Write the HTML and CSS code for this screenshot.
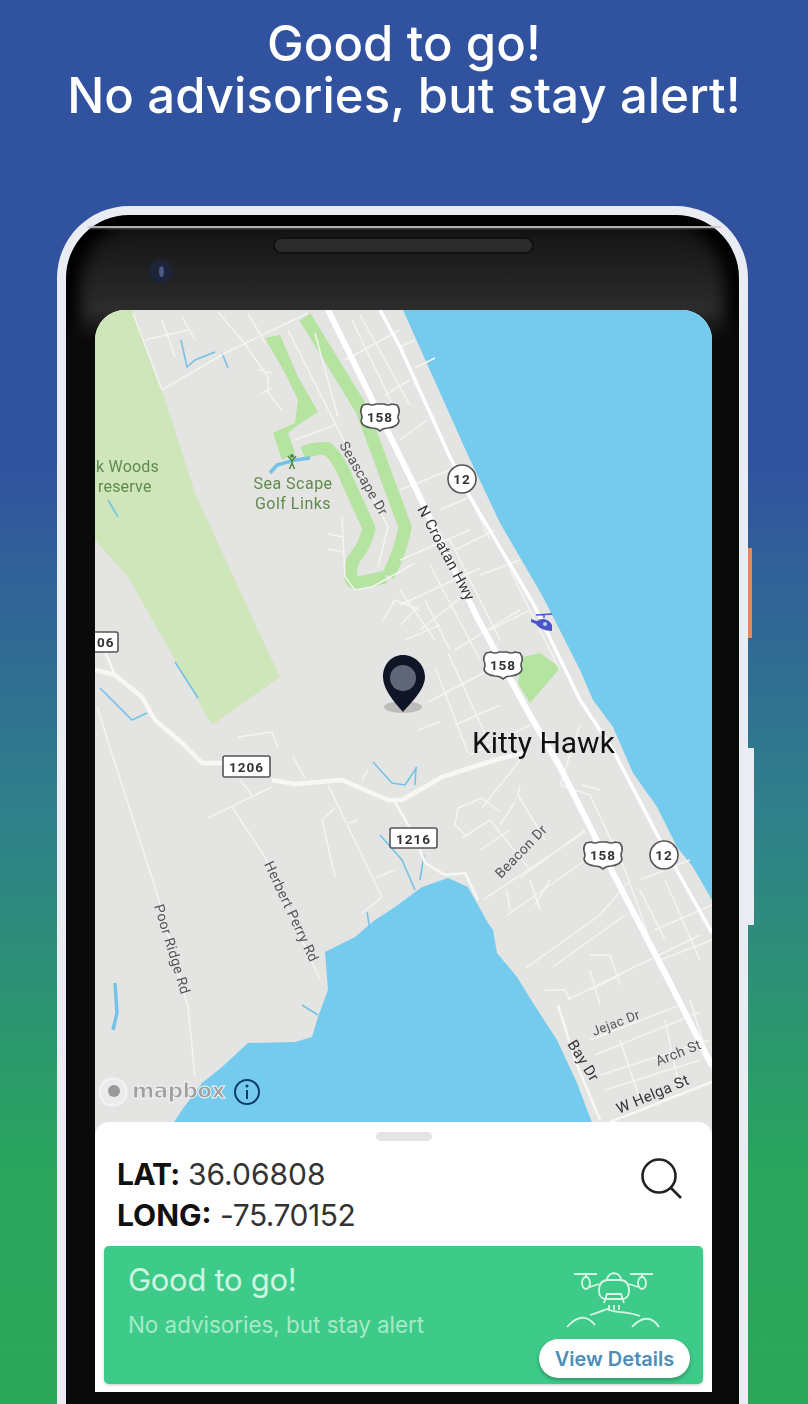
FILE: index.html
```html
<!DOCTYPE html>
<html lang="en">
<head>
  <meta charset="UTF-8">
  <meta name="viewport" content="width=device-width, initial-scale=1.0">
  <title>Good to go</title>
  <link rel="stylesheet" href="styles.css">
</head>
<body>
<div class="page">
  <h1 class="headline">Good to go!<br>No advisories, but stay alert!</h1>

  <div class="phone">
    <div class="btn-power"></div>
    <div class="btn-volume"></div>
    <div class="bezel">
      <div class="glint"></div>
      <div class="speaker"></div>
      <div class="camera"></div>

      <div class="screen">
        <svg class="map" viewBox="95 310 617 826" width="617" height="826">
          <defs>
            <g id="us-shield">
              <path class="shield" d="M-17 -12 L-12 -13 Q-8 -11 -4 -13 L4 -13 Q8 -11 12 -13 L17 -12 Q20 -8 19 -4 Q17 0 19 4 Q18 10 8 11 Q3 11 0 14 Q-3 11 -8 11 Q-18 10 -19 4 Q-17 0 -19 -4 Q-20 -8 -17 -12 Z"/>
              <text class="sign-text" text-anchor="middle" y="5">158</text>
            </g>
            <g id="nc-circle">
              <circle class="shield" r="14"/>
              <text class="sign-text" text-anchor="middle" y="5">12</text>
            </g>
          </defs>

          <rect class="land" x="95" y="310" width="617" height="826"/>

          <!-- water -->
          <path class="water" d="M403 310 H712 V900 L693 867 677 847 657 807 633 773 613 727 593 700 580 670 543 597 500 523 467 453 Z"/>
          <path class="water" d="M165 1136 L182 1110 202 1083 222 1067 248 1043 295 1042 312 1037 318 1017 328 990 325 952 355 937 375 920 395 907 422 887 448 878 468 887 488 923 493 930 497 953 517 977 533 1003 557 1040 577 1083 597 1136 Z"/>

          <!-- parks -->
          <path class="park" d="M95 310 H133 L162 390 195 493 258 630 280 677 212 725 158 630 128 577 95 540 Z"/>
          <path class="golf" d="M265 338 L280 335 298 377 318 412 298 425 288 433 295 453 282 460 273 433 295 423 298 400 285 373 Z"/>
          <path class="golf-strip" d="M305 317 L362 410 405 527 Q402 548 388 576"/>
          <path class="golf-strip" d="M303 453 Q316 447 328 449 Q340 460 348 482 L369 528 Q366 545 353 560 Q346 584 358 583 L386 577"/>
          <path class="golf" d="M523 657 L540 653 560 668 530 703 518 683 Z"/>

          <!-- creeks -->
          <path class="creek" d="M181 340 L187 367 195 360 215 352 M222 353 L228 368 M108 500 L118 517 M175 662 L198 698 M100 688 L132 720 147 713 M373 762 L392 783 405 785 417 767 M416 767 L415 785 M380 835 L402 860 415 890 M424 855 L420 880 M302 1005 L318 1015 M367 912 L370 930"/>
          <path class="creek-wide" d="M270 473 L277 465 295 460 310 458 M115 983 L117 1013 113 1030"/>

          <!-- minor roads -->
          <path class="road-thin" d="M133 313 L162 390 225 353 308 313 M145 340 L188 330 M162 320 L175 357 M182 317 L195 340 M218 312 L242 340 268 377 268 393 282 410 M248 313 L265 343 M258 370 L272 373 M262 393 L272 388 M288 330 L335 423 388 527 378 567 M295 440 L335 425 M315 333 L338 417 M342 517 L345 577 355 590 372 587 415 563 M328 534 L343 537 M328 549 L343 552"/>
          <path class="road-thin" d="M352 320 L400 420 M360 315 L410 405 M345 360 L400 330 M385 395 L410 380 M415 368 L435 358 M420 390 L450 460 M400 440 L427 420 M400 490 L450 470 M400 560 L470 530 M425 600 L450 650 M400 605 L480 568 M470 590 L420 630 M430 565 L480 660 M450 540 L500 640 M455 650 L520 610 M400 590 L435 640 M400 625 L420 605 M435 667 L468 753 M448 653 L488 740 M428 702 L495 667 M455 725 L500 705 M418 730 L440 722 M470 755 L530 725 M383 620 L395 600 420 610 M405 640 L440 625"/>
          <path class="road-thin" d="M97 707 L158 897 188 1007 195 1077 M208 818 L272 787 M238 737 L272 732 278 748 M293 757 L305 778 M328 785 L382 897 362 913 M232 807 L265 857 320 980 M240 780 L252 795 M335 808 L322 820 335 877 M348 823 L358 820 M375 878 L395 870 M362 780 L368 770"/>
          <path class="road-thin" d="M520 760 L482 808 M458 808 L482 798 L500 812 M458 808 L455 825 465 835 M520 785 L518 795 L545 840 M500 825 L515 802 M462 838 L490 820 530 870 M480 850 L510 830 M520 878 L585 830 M483 900 L585 832 M510 910 L507 890 M530 880 L540 910 M550 880 L535 905 M507 915 L615 840 M526 968 L600 915 630 880 M553 967 L625 915 M590 955 L610 955 620 985 M590 990 L620 975 M545 990 L565 990 570 1000 M567 1000 L700 935 M590 970 L600 1005"/>
          <path class="road-thin" d="M580 725 L560 785 590 795 625 870 650 940 M582 785 L600 790 M640 890 L665 940 M665 880 L700 960 M640 880 L690 860 M590 1040 L680 1005 M595 1055 L700 1012 M600 1075 L710 1040 M605 1090 L700 1060 M620 1040 L640 1100 M665 1020 L680 1090 M690 1000 L712 1070 M655 930 L712 905 M660 960 L712 940"/>
          <path class="road-thin" d="M400 347 L415 340 M470 497 L440 510 M470 497 L490 540 M455 550 L495 530 M480 575 L520 560 M490 630 L530 610 M510 570 L560 670"/>

          <!-- major roads -->
          <path class="road-mid" d="M558 1005 L575 1060 600 1120"/>
          <path class="road-mid" d="M610 1122 L712 1082"/>
          <path class="road-mid" d="M395 802 L415 837 425 863 445 875 465 873 478 900"/>
          <path class="road-mid" d="M100 640 L115 675"/>
          <path class="road-mid thick" d="M95 670 L115 675 142 697 155 720 182 743 202 763 225 763 M272 780 L295 784 342 780 388 800 402 800 442 777 495 760 527 752"/>
          <path class="road-nc" d="M380 310 L400 347 450 457 470 497 533 603 580 700 613 750 660 840 712 933"/>
          <path class="road-us" d="M328 310 L415 487 477 617 527 710 560 767 613 873 667 977 712 1066"/>

          <!-- shields -->
          <use href="#us-shield" x="380" y="417"/>
          <use href="#us-shield" x="503" y="665"/>
          <use href="#us-shield" x="603" y="855"/>
          <use href="#nc-circle" x="462" y="479"/>
          <use href="#nc-circle" x="664" y="855"/>
          <rect class="shield" x="85" y="632" width="33" height="20" rx="2"/>
          <text class="sign-text" x="97" y="647">06</text>
          <rect class="shield" x="223" y="756" width="47" height="21" rx="2"/>
          <text class="sign-text" x="246.5" y="772" text-anchor="middle">1206</text>
          <rect class="shield" x="390" y="828" width="47" height="20" rx="2"/>
          <text class="sign-text" x="413.5" y="844" text-anchor="middle">1216</text>

          <!-- poi -->
          <g class="golfer">
            <circle cx="292" cy="456" r="2"/>
            <path d="M288 456 L292 461 296 456 M292 459 V464 M292 463 L289.5 469 M292 463 L294.5 469"/>
          </g>
          <g class="heli">
            <path class="heli-body" d="M531 619 L537 621 C542 617 549 619 552 625 L552 631 C545 631 538 628 536 624 L531 622 Z"/>
            <path class="heli-rotor" d="M536 615 L552 614 M544 615 V618"/>
            <circle class="heli-window" cx="545" cy="624" r="2"/>
          </g>

          <!-- labels -->
          <text class="lbl-park tight" x="96" y="472">k Woods</text>
          <text class="lbl-park tight" x="98" y="492">reserve</text>
          <text class="lbl-park" x="293" y="489" text-anchor="middle">Sea Scape</text>
          <text class="lbl-park" x="293" y="509" text-anchor="middle">Golf Links</text>
          <text class="lbl-road" transform="translate(339 445) rotate(60)">Seascape Dr</text>
          <text class="lbl-road dark" transform="translate(417 509) rotate(62)">N Croatan Hwy</text>
          <text class="lbl-city" x="472" y="753">Kitty Hawk</text>
          <text class="lbl-road" transform="translate(264 864) rotate(65)">Herbert Perry Rd</text>
          <text class="lbl-road" transform="translate(154 906) rotate(73)">Poor Ridge Rd</text>
          <text class="lbl-road" transform="translate(501 879) rotate(-46)">Beacon Dr</text>
          <text class="lbl-road small" transform="translate(594 1036) rotate(-21)">Jejac Dr</text>
          <text class="lbl-road" transform="translate(658 1066) rotate(-22)">Arch St</text>
          <text class="lbl-road dark" transform="translate(619 1114) rotate(-23)">W Helga St</text>
          <text class="lbl-road dark" transform="translate(567 1044) rotate(58)">Bay Dr</text>

          <!-- pin -->
          <ellipse class="pin-shadow" cx="403" cy="707" rx="19" ry="6"/>
          <path class="pin" d="M403 655 C415 655 425 665 425 677 C425 689 412 702 403 712 C394 702 383 689 383 677 C383 665 391 655 403 655 Z"/>
          <circle class="pin-dot" cx="403" cy="678" r="13"/>

          <!-- attribution -->
          <circle class="mb-ring" cx="113" cy="1092" r="13.5"/>
          <circle class="mb-core" cx="114" cy="1091" r="6"/>
          <text class="mb-word" x="132" y="1098">mapbox</text>
          <circle class="info-ring" cx="247" cy="1092" r="12"/>
          <circle class="info-dot" cx="247" cy="1086" r="1.5"/>
          <path class="info-bar" d="M247 1090 V1099"/>
        </svg>

        <div class="sheet">
          <div class="handle"></div>
          <div class="coords-row">
            <div class="coords">
              <div><b class="lat-key">LAT:</b> 36.06808</div>
              <div><b>LONG:</b> <span class="long-val">-75.70152</span></div>
            </div>
            <svg class="search" viewBox="0 0 44 44" width="44" height="44">
              <circle cx="19" cy="19" r="16.5"/>
              <path d="M31 31 L41 41"/>
            </svg>
          </div>
          <div class="status-card">
            <div class="status-text">
              <div class="status-title">Good to go!</div>
              <div class="status-sub">No advisories, but stay alert</div>
            </div>
            <div class="status-side">
              <svg class="drone" viewBox="0 0 100 62" width="100" height="62">
                <path d="M10 7 H33 M66 7 H89 M22 7 V10 M78 7 V10"/>
                <ellipse cx="22" cy="16" rx="4" ry="6"/>
                <ellipse cx="78" cy="16" rx="4" ry="6"/>
                <path d="M26 20 L35 17 M65 17 L74 20"/>
                <path d="M43 13 C44 4 56 4 57 13"/>
                <path d="M35 24 C35 16 39 13 44 13 H56 C61 13 65 16 65 24 C65 29 62 32 58 32 H42 C38 32 35 29 35 24 Z"/>
                <path d="M40 36 L43 27 H57 L60 36 M44 32 H56"/>
                <path d="M45 38 V43 M50 38 V43 M55 38 V43"/>
                <path d="M3 60 C13 49 22 47 31 58 M26 48 C34 46 38 44 43 42 C52 47 60 43 76 49 M68 60 C78 49 88 49 95 60"/>
              </svg>
              <button class="details-btn">View Details</button>
            </div>
          </div>
        </div>
      </div>
    </div>
  </div>
</div>
</body>
</html>
```

FILE: styles.css
```css
* { box-sizing: border-box; }
html, body { margin: 0; padding: 0; }
body { font-family: Inter, "Liberation Sans", sans-serif; }

.page { width: 808px; height: 1404px; overflow: hidden; padding-top: 18px; background: linear-gradient(180deg, #31539f 0, #31539f 33%, #2f808a 58%, #29a65c 84%, #2aa85a 100%); }
.headline { margin: 0 0 84px; height: 104px; text-align: center; color: #fff; font-size: 49px; line-height: 52px; font-weight: 500; letter-spacing: .1px; }

.phone { position: relative; width: 691px; margin-left: 57px; border: 9px solid #eaecf3; border-bottom: 0; border-radius: 72px 72px 0 0; background: #000; }
.btn-power { position: absolute; right: -13px; top: 333px; width: 4px; height: 90px; background: #e8855f; }
.btn-volume { position: absolute; right: -15px; top: 533px; width: 6px; height: 177px; background: #eaecf3; }

.bezel { position: relative; margin-top: 11px; padding: 84px 26px 12px 29px; border-radius: 60px 60px 0 0; background: linear-gradient(180deg, #141414 0, #1f1f1f 40px, #2c2c2c 84px); box-shadow: inset 22px 0 16px -8px #000, inset -22px 0 16px -8px #000; }
.bezel::before { content: ""; position: absolute; left: 0; right: 0; top: 84px; bottom: 0; background: linear-gradient(180deg, rgba(10, 10, 10, 0) 0, #0a0a0a 30px); }
.glint { height: 2px; margin: -84px -8px 82px; border-radius: 2px; background: #c9c9c9; box-shadow: 0 1px 2px rgba(255, 255, 255, .35); opacity: .85; }
.speaker { position: absolute; left: 207px; top: 11px; width: 261px; height: 17px; border-radius: 9px; border: 2px solid #111; background: #2b2b2b; }
.camera { position: absolute; left: 83px; top: 33px; width: 24px; height: 25px; border-radius: 50%; background: #1d2438; }
.camera::after { content: ""; position: absolute; left: 10px; top: 7px; width: 5px; height: 11px; border-radius: 50%; background: #4c5a86; }

.screen { position: relative; width: 617px; height: 1082px; overflow: hidden; border-radius: 30px 30px 0 0; background: #fff; }
.map { display: block; filter: blur(.6px); }
.land { fill: #e4e4e2; }
.water { fill: #74cbee; }
.park { fill: #cfe6ba; }
.golf { fill: #b5e3a0; }
.golf-strip { fill: none; stroke: #b5e3a0; stroke-width: 13; stroke-linejoin: round; }
.creek { fill: none; stroke: #74c3e6; stroke-width: 1.6; }
.creek-wide { fill: none; stroke: #74c3e6; stroke-width: 3.5; }
.road-thin { fill: none; stroke: #f4f4f2; stroke-width: 1.5; }
.road-mid { fill: none; stroke: #f7f7f5; stroke-width: 2.5; }
.road-mid.thick { stroke-width: 4.5; stroke-linejoin: round; }
.road-nc { fill: none; stroke: #fff; stroke-width: 3.5; }
.road-us { fill: none; stroke: #fff; stroke-width: 6; }
.shield { fill: #fff; stroke: #555; stroke-width: 1.6; }
.sign-text { font-family: Roboto, sans-serif; font-size: 13.5px; font-weight: 700; fill: #333; letter-spacing: 1px; }
.golfer path { fill: none; stroke: #4e8a3c; stroke-width: 1.5; }
.golfer circle { fill: #4e8a3c; }
.heli-body { fill: #4a55c8; }
.heli-rotor { fill: none; stroke: #4a55c8; stroke-width: 1.4; }
.heli-window { fill: #b7d6ee; }
.lbl-park { font-family: Roboto, sans-serif; font-size: 16px; letter-spacing: .5px; fill: #5f8a4c; }
.lbl-park.tight { letter-spacing: .2px; }
.lbl-road { font-family: Roboto, sans-serif; font-size: 14px; letter-spacing: .4px; fill: #555; }
.lbl-road.dark { font-size: 15px; fill: #333; }
.lbl-road.small { font-size: 13px; }
.lbl-city { font-family: Roboto, sans-serif; font-size: 30px; fill: #111; }
.pin-shadow { fill: #bcbcba; }
.pin { fill: #101625; }
.pin-dot { fill: #5f6677; }
.mb-ring { fill: rgba(255, 255, 255, .25); stroke: #f2f2f2; stroke-width: 2.5; }
.mb-core { fill: #999; }
.mb-word { font-family: "DejaVu Sans", sans-serif; font-size: 21.5px; font-weight: 700; fill: #a0a0a0; stroke: #f4f4f4; stroke-width: .9; letter-spacing: -.6px; }
.info-ring { fill: none; stroke: #0e3a6b; stroke-width: 2; }
.info-dot { fill: #0e3a6b; }
.info-bar { stroke: #0e3a6b; stroke-width: 2; }

.sheet { position: relative; margin-top: -14px; height: 270px; padding: 10px 9px 8px; background: #fff; border-radius: 14px 14px 0 0; }
.handle { width: 56px; height: 9px; margin: 0 auto; border-radius: 5px; background: #e4e4e4; }
.coords-row { display: flex; justify-content: space-between; height: 105px; padding: 13px 19px 0 13px; }
.coords { font-size: 30px; line-height: 41px; color: #333; }
.coords b { font-weight: 700; color: #111; }
.lat-key { letter-spacing: -.8px; }
.long-val { letter-spacing: -.5px; }
.search { margin-top: 3px; fill: none; stroke: #222; stroke-width: 2.6; }

.status-card { display: flex; justify-content: space-between; height: 138px; padding: 15px 13px 6px 24px; border-radius: 5px; background: #3ecb8a; box-shadow: 0 1px 3px rgba(0, 0, 0, .2); }
.status-title { font-size: 31px; line-height: 38px; color: #cdf5e0; letter-spacing: -.3px; }
.status-sub { margin-top: 11px; font-size: 22.4px; line-height: 30px; color: #a6eac6; }
.status-side { display: flex; flex-direction: column; align-items: flex-end; justify-content: space-between; }
.drone { margin: 6px 26px 0 0; fill: none; stroke: #d9f7e7; stroke-width: 1.8; }
.details-btn { width: 151px; height: 39px; padding: 0; border: 0; border-radius: 20px; background: #fff; color: #4d8db8; font-family: Inter, sans-serif; font-size: 20px; font-weight: 600; box-shadow: 0 2px 4px rgba(0, 0, 0, .3); }
```
